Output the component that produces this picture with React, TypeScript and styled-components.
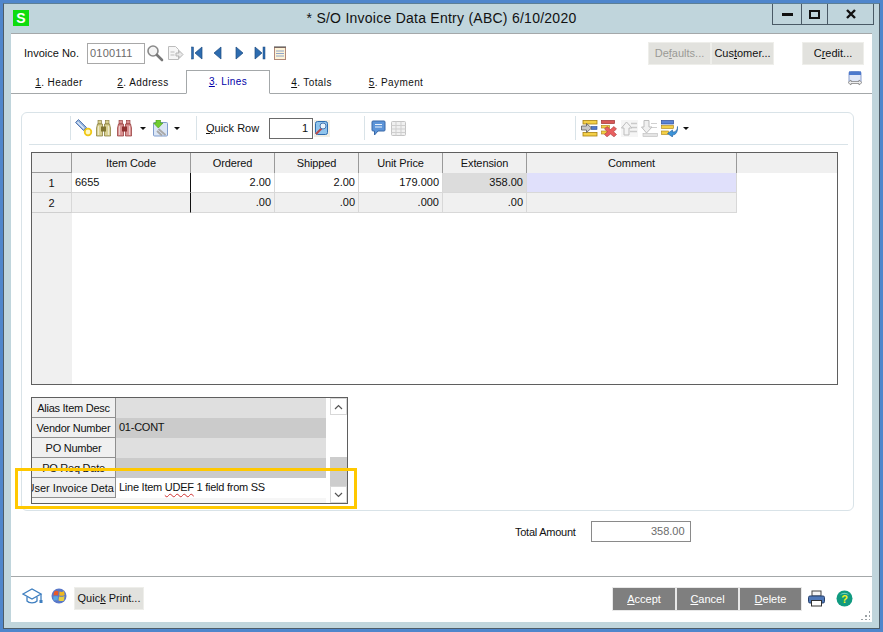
import React from "react";
import styled, { createGlobalStyle } from "styled-components";

const Global = createGlobalStyle`
  html, body { margin: 0; padding: 0; background: #4f86cc; }
  body { font-family: "Liberation Sans", Arial, sans-serif; font-size: 11px; color: #111; }
  * { box-sizing: border-box; }
  u { text-underline-offset: 1px; }
`;

const Frame = styled.div`
  width: 883px; height: 632px; background: #4f86cc; padding: 3px;
  display: flex; flex-direction: column;
`;
const Chrome = styled.div`
  flex: 1; min-height: 0; background: #c0d5dc; border: 1px solid #4d5c68; border-top-color: #5d7f96;
  display: flex; flex-direction: column; padding: 0 7px 6px 7px;
`;
const TitleBar = styled.div`
  height: 29px; display: grid; grid-template-columns: 1fr auto 1fr; align-items: start; flex: none;
`;
const AppLogo = styled.div`
  width: 16px; height: 16px; background: #0fdc0f; color: #fff; font: bold 14px/16px "Liberation Sans", sans-serif;
  text-align: center; margin: 6px 0 0 2px;
`;
const Title = styled.div`
  font-size: 14px; letter-spacing: 0.25px; line-height: 20px; padding-top: 4px; color: #111; white-space: nowrap;
`;
const WinControls = styled.div`
  justify-self: end; display: flex; height: 21px; margin-right: -2px; border: 1px solid #4a5a66; border-top: none;
`;
const WinBtn = styled.div<{ $w: number }>`
  width: ${p => p.$w}px; display: flex; align-items: center; justify-content: center;
  & + & { border-left: 1px solid #4a5a66; }
`;
const Body = styled.div`
  flex: 1; min-height: 0; background: #fff; border-top: 1px solid #a4a8aa; display: flex; flex-direction: column;
`;
const TopRow = styled.div`
  height: 36px; display: flex; align-items: center; padding: 2px 8px 0 13px; flex: none;
`;
const Label = styled.span<{ $ml?: number }>`
  font-size: 11px; white-space: nowrap; margin-left: ${p => p.$ml ?? 0}px;
`;
const InvoiceInput = styled.div`
  width: 58px; height: 21px; border: 1px solid #a8a8a8; color: #6b6b6b; margin-left: 8px;
  padding: 0 2px; line-height: 19px; font-size: 11px; letter-spacing: 0.2px;
`;
const NavIcons = styled.div`
  display: flex; align-items: center; margin-left: 1px;
`;
const IconSlot = styled.span<{ $w?: number; $m?: string }>`
  width: ${p => p.$w ?? 16}px; height: 18px; display: flex; align-items: center; justify-content: center; flex: none;
  margin: ${p => p.$m ?? "0"};
`;
const Spacer = styled.div<{ $w?: number }>`
  ${p => (p.$w ? `flex: 0 0 ${p.$w}px;` : "flex: 1;")}
`;
const GreyBtn = styled.div<{ $w: number; $off?: boolean; $ml?: number }>`
  width: ${p => p.$w}px; height: 23px; background: #e2e2de; border: 1px solid #eeeeea; text-align: center;
  line-height: 21px; font-size: 11px; color: ${p => (p.$off ? "#9a9a96" : "#111")}; flex: none; white-space: nowrap;
  margin-left: ${p => p.$ml ?? 0}px;
`;
const TabRow = styled.div`
  height: 24px; display: flex; border-bottom: 1px solid #a4a8aa; flex: none; position: relative;
`;
const Tab = styled.div<{ $w: number; $active?: boolean; $pr?: number }>`
  width: ${p => p.$w}px; height: ${p => (p.$active ? 24 : 23)}px; flex: none; text-align: center;
  font-size: 10px; letter-spacing: 0.4px; line-height: ${p => (p.$active ? 22 : 25)}px;
  padding-right: ${p => p.$pr ?? 0}px;
  color: ${p => (p.$active ? "#0000a8" : "#111")};
  ${p => p.$active && "border: 1px solid #a4a8aa; border-bottom: 1px solid #fff; background:#fff;"}
`;
const TabEnd = styled.div`
  flex: 1; display: flex; justify-content: flex-end; padding: 1px 9px 0 0;
`;
const Panel = styled.div`
  flex: none; margin: 18px 18px 0 10px; height: 399px; border: 1px solid #d9e3e8; border-radius: 6px;
  padding: 0 5px 0 9px; position: relative;
`;
const Toolbar = styled.div`
  height: 32px; margin: 0 0 7px -2px; padding-bottom: 1px; border-bottom: 1px solid #d9e3e8; display: flex; align-items: center;
`;
const ToolGroup = styled.div<{ $left: number }>`
  margin-left: ${p => p.$left}px; height: 24px; border-left: 1px solid #d9e3e8; padding-left: 4px;
  display: flex; align-items: center; flex: none;
`;
const Caret = styled.span`
  width: 0; height: 0; border: 3px solid transparent; border-top: 3px solid #111; border-bottom: none; margin: 0 5px 0 5px;
`;
const QuickInput = styled.div`
  width: 44px; height: 21px; border: 1px solid #6a6a6a; text-align: right; padding-right: 4px; line-height: 19px; margin-left: 10px;
`;
const Grid = styled.div`
  width: 807px; height: 233px; border: 1px solid #5f5f5f; background: #fff; display: flex;
`;
const RowHeadCol = styled.div`
  width: 40px; background: #f0f0f0; flex: none; display: flex; flex-direction: column;
`;
const GridMain = styled.div`
  flex: 1; display: flex; flex-direction: column;
`;
const HeadRow = styled.div`
  display: grid; grid-template-columns: 119px 84px 84px 84px 84px 210px 1fr; height: 20px; background: #f0f0f0;
`;
const HeadCell = styled.div`
  text-align: center; font-size: 11px; letter-spacing: -0.1px; line-height: 20px; border-right: 1px solid #9a9a9a; border-bottom: 1px solid #9a9a9a;
  &:last-child { border: none; }
`;
const DataRow = styled.div`
  display: grid; grid-template-columns: 119px 84px 84px 84px 84px 210px; height: 20px;
`;
const Cell = styled.div<{ $bg?: string; $right?: boolean; $sep?: boolean }>`
  background: ${p => p.$bg ?? "#fff"}; font-size: 11px; line-height: 19px; padding: 0 3px;
  text-align: ${p => (p.$right ? "right" : "left")};
  border-right: 1px solid ${p => (p.$sep ? "#111" : "#d8d8d8")}; border-bottom: 1px solid #d8d8d8;
`;
const RowNum = styled.div`
  height: 20px; text-align: center; font-size: 11px; line-height: 20px; border-bottom: 1px solid #cfcfcf; border-right: 1px solid #d8d8d8;
`;
const CornerCell = styled(RowNum)`
  border-bottom: 1px solid #9a9a9a; border-right: 1px solid #9a9a9a;
`;
const LowerGrid = styled.div`
  width: 317px; height: 107px; border: 1px solid #5f5f5f; margin-top: 12px; display: flex; background: #fff;
`;
const LowerTable = styled.div`
  width: 294px; flex: none; display: grid; grid-template-columns: 84px 1fr; grid-auto-rows: 20px; align-content: start; background: #f6f6f6;
`;
const LowerLabel = styled.div<{ $clip?: boolean }>`
  background: #f0f0f0; line-height: 20px; border-right: 1px solid #8f8f8f; border-bottom: 1px solid #8f8f8f;
  font-size: 11px; white-space: nowrap; overflow: hidden; display: flex;
  justify-content: ${p => (p.$clip ? "flex-end" : "center")};
  letter-spacing: ${p => (p.$clip ? "0" : "-0.25px")};
  padding-right: ${p => (p.$clip ? 1 : 0)}px;
`;
const LowerValue = styled.div<{ $bg: string }>`
  background: ${p => p.$bg}; line-height: 19px; padding: 0 3px; font-size: 11px; letter-spacing: -0.25px; white-space: nowrap;
`;
const Wavy = styled.span`
  text-decoration: underline wavy #d03030 1px; text-underline-offset: 2px;
`;
const ScrollBar = styled.div`
  width: 17px; margin-left: 4px; flex: none; display: flex; flex-direction: column;
`;
const ScrollBtn = styled.div`
  height: 17px; background: #fff; border: 1px solid #d8d8d8; display: flex; align-items: center; justify-content: center; flex: none;
`;
const ScrollTrack = styled.div`
  flex: 1; background: #fff; display: flex; flex-direction: column; justify-content: flex-end;
`;
const ScrollThumb = styled.div`
  height: 29px; background: #cdcdcd;
`;
const Highlight = styled.div`
  position: absolute; left: -7px; top: 355px; width: 342px; height: 41px; border: 3px solid #ffc800; pointer-events: none;
`;
const TotalRow = styled.div`
  flex: none; display: flex; align-items: center; height: 21px; margin: 10px 0 0 504px;
`;
const TotalLabel = styled(Label)`
  letter-spacing: -0.25px;
`;
const TotalInput = styled.div`
  width: 100px; height: 21px; margin-left: 15px; border: 1px solid #8a8a8a; color: #6b6b6b; text-align: right;
  padding-right: 5px; line-height: 19px;
`;
const Footer = styled.div`
  margin-top: 34px; flex: 1; border-top: 1px solid #a4a8aa; display: flex; align-items: flex-start; padding: 10px 0 0 10px; position: relative;
`;
const FootBtn = styled.div<{ $w: number }>`
  width: ${p => p.$w}px; height: 22px; margin: 1px 2px 0 0; background: #7f7f7f; color: #fff; text-align: center; line-height: 22px; font-size: 11px; flex: none;
  outline: 1px solid #e8e8e8;
`;
const Grip = styled.div`
  position: absolute; right: 2px; bottom: 2px; width: 10px; height: 10px;
  background-image: radial-gradient(#9aa0a4 1px, transparent 1.2px); background-size: 4px 4px;
  clip-path: polygon(100% 0, 100% 100%, 0 100%);
`;

const Mag = () => (
  <svg width="18" height="18" viewBox="0 0 18 18"><circle cx="7" cy="7" r="5" fill="#f4f4f4" stroke="#8a8a8a" strokeWidth="1.6"/><path d="M11 11l5 5" stroke="#777" strokeWidth="2.6" strokeLinecap="round"/></svg>
);
const DocArrow = () => (
  <svg width="17" height="17" viewBox="0 0 17 17"><path d="M1.500 1.500h7l3 3v10h-10z" fill="#f6f6f6" stroke="#bcbcbc"/><path d="M9 8h3V5.500l4 4-4 4V11H9z" fill="#e8e8e8" stroke="#b4b4b4"/><path d="M3.500 7h4M3.500 10h4" stroke="#bbb"/></svg>
);
const Nav = ({ d, bar }: { d: "l" | "r"; bar?: boolean }) => (
  <svg width="14" height="14" viewBox="0 0 14 14">
    {d === "l" ? <path d={bar ? "M12 1v12L5 7z" : "M10 1v12L3 7z"} fill="#2d6cb0" stroke="#1c4a80" strokeWidth=".7"/> : <path d={bar ? "M2 1v12l7-6z" : "M4 1v12l7-6z"} fill="#2d6cb0" stroke="#1c4a80" strokeWidth=".7"/>}
    {bar && <rect x={d === "l" ? 1.500 : 10} width="2" y="1" height="12" fill="#2d6cb0" stroke="#1c4a80" strokeWidth=".5"/>}
  </svg>
);
const Memo = () => (
  <svg width="14" height="16" viewBox="0 0 14 16"><rect x="1.500" y="2.500" width="11" height="12" fill="#fdf3d8" stroke="#b08878"/><path d="M3 6h8M3 8.500h8M3 11h8" stroke="#8ea4c8"/><path d="M2 1v2M4 1v2M6 1v2M8 1v2M10 1v2M12 1v2" stroke="#444"/></svg>
);
const SwapIcon = () => (
  <svg width="16" height="16" viewBox="0 0 16 16"><rect x="2" y="0.500" width="12" height="11" rx="1.500" fill="#dfe6f6" stroke="#8a9ecc"/><rect x="2" y="0.500" width="12" height="3.500" fill="#4c78cc"/><path d="M1 11.500l3-2.500v1.500h8V9l3 2.500-3 2.500v-1.500H4V14z" fill="#eee" stroke="#777" strokeWidth=".7"/></svg>
);
const Wand = () => (
  <svg width="18" height="18" viewBox="0 0 18 18"><path d="M.5 3.500L3.500.5l8 8-3 3z" fill="#8fb0dc" stroke="#4f72ac" strokeWidth=".9"/><path d="M2.500 3l6.500 6.500" stroke="#e4edf8" strokeWidth="1.200"/><circle cx="13" cy="13" r="3.300" fill="#fff8c8" stroke="#f0c818" strokeWidth="1.800"/></svg>
);
const Binoc = ({ c, dark }: { c: string; dark: string }) => (
  <svg width="17" height="17" viewBox="0 0 17 17"><rect x="3" y=".5" width="3.500" height="3.500" fill={c} stroke={dark} strokeWidth=".6"/><rect x="10.500" y=".5" width="3.500" height="3.500" fill={c} stroke={dark} strokeWidth=".6"/><path d="M2.500 4h5v12h-6V8z" fill={c} stroke={dark} strokeWidth=".7"/><path d="M9.500 4h5l1 4v8h-6z" fill={c} stroke={dark} strokeWidth=".7"/><rect x="6" y="6.500" width="5" height="5" fill={dark}/><path d="M3.500 6v9M13.500 6v9" stroke="#fff" strokeOpacity=".55" strokeWidth="1.200"/></svg>
);
const Download = () => (
  <svg width="17" height="17" viewBox="0 0 17 17"><rect x="1.500" y="2.500" width="14" height="13.500" rx="1" fill="#dbe6f6" stroke="#7f9ccc"/><path d="M6.500 9l7 6M5 11l5 4.500" stroke="#a8a8a8" strokeWidth="1.800"/><path d="M4 0h4.500v3H11L6.300 8 1.500 3H4z" fill="#70cc30" stroke="#4c9c20" strokeWidth=".6"/></svg>
);
const QuickIcon = () => (
  <svg width="16" height="17" viewBox="0 0 16 17"><rect width="16" height="17" fill="#f0eee4"/><rect x="1.500" y="1.500" width="12" height="13" rx="2" fill="#8fc4ec" stroke="#2c6cb0"/><path d="M2 14L8 8" stroke="#b84848" strokeWidth="2"/><circle cx="9" cy="6" r="3" fill="#e8f4fc" stroke="#4878b0"/></svg>
);
const Bubble = () => (
  <svg width="15" height="16" viewBox="0 0 15 16"><path d="M2 1h11a1 1 0 011 1v8a1 1 0 01-1 1H7l-3.500 4v-4H2a1 1 0 01-1-1V2a1 1 0 011-1z" fill="#5c94d8" stroke="#3868a8"/><path d="M4 4.500h7M4 7h7" stroke="#e8f2fc"/></svg>
);
const GridIcon = () => (
  <svg width="15" height="15" viewBox="0 0 15 15"><rect x=".5" y=".5" width="14" height="14" rx="1" fill="#f0f0f0" stroke="#c4c4c4"/><path d="M.5 4.500h14M.5 8h14M.5 11.500h14M5 .5v14M10 .5v14" stroke="#cfcfcf"/></svg>
);
const RowInsert = () => (
  <svg width="17" height="17" viewBox="0 0 17 17"><rect x="2" y=".5" width="14" height="3.500" fill="#f4d048" stroke="#a88010" strokeWidth=".8"/><rect x="2" y="12.500" width="14" height="3.500" fill="#f4d048" stroke="#a88010" strokeWidth=".8"/><rect x="10" y="6.500" width="6" height="3" fill="#5078c8" stroke="#2c4c98" strokeWidth=".6"/><path d="M.5 6h5V3.500L10.500 8l-5 4.500V10h-5z" fill="#c8c8c8" stroke="#5c5c5c" strokeWidth=".8"/></svg>
);
const RowDelete = () => (
  <svg width="17" height="17" viewBox="0 0 17 17"><rect x=".5" y=".5" width="13" height="3" fill="#d85858" stroke="#a03030" strokeWidth=".7"/><rect x=".5" y="5.500" width="8" height="2.500" fill="#f4d048" stroke="#a88010" strokeWidth=".6"/><rect x=".5" y="11" width="6" height="3" fill="#f4d048" stroke="#a88010" strokeWidth=".6"/><path d="M6 6.500l3.500 3 3.500-3 2.500 2.500-3 2.700 3 2.800-2.500 2.300L9.500 14l-3.500 2.800-2.500-2.300 3-2.800-3-2.700z" fill="#e86060" stroke="#a83838" strokeWidth=".6"/></svg>
);
const RowUp = () => (
  <svg width="17" height="17" viewBox="0 0 17 17"><rect width="17" height="17" fill="#f5f5f5"/><path d="M5.500 2L11 8H8v7H3V8H0.500z" fill="#f4f4f4" stroke="#bdbdbd"/><path d="M10 3.500h6M11 7.500h5M9 11.500h7" stroke="#cacaca" strokeWidth="1.400"/></svg>
);
const RowDown = () => (
  <svg width="17" height="17" viewBox="0 0 17 17"><path d="M5.500 13L11 7H8V.5H3V7H.5z" fill="#f0f0f0" stroke="#bdbdbd"/><path d="M10 3.500h6M11 7.500h5" stroke="#d0d0d0" strokeWidth="1.200"/><rect x="2" y="13.500" width="14.500" height="3" fill="#e4e4e4" stroke="#bbb" strokeWidth=".6"/></svg>
);
const RowWrap = () => (
  <svg width="17" height="17" viewBox="0 0 17 17"><rect x=".5" y=".5" width="12" height="3.500" fill="#5c84d4" stroke="#2c4c98" strokeWidth=".7"/><rect x=".5" y="5.500" width="12" height="3" fill="#f4d048" stroke="#a88010" strokeWidth=".6"/><rect x=".5" y="11" width="7" height="3.500" fill="#f4d048" stroke="#a88010" strokeWidth=".6"/><path d="M16.500 6.500c0 3.500-1.500 5.500-5 5.500v-2l-5 3.500 5 3.500v-2c3.500 0 5.500-3.500 5-8.500z" fill="#3c94d8" stroke="#205c9c" strokeWidth=".6"/></svg>
);
const Cap = () => (
  <svg width="21" height="18" viewBox="0 0 21 18" fill="none" stroke="#3f7fc0" strokeWidth="1.300"><path d="M1 7l9-5 9 5-9 5z" fill="#fff"/><path d="M5 10v4c2 2.500 8 2.500 10 0v-4"/><path d="M19 7v6"/><rect x="17.500" y="13" width="3" height="3" fill="#3f7fc0" stroke="none"/></svg>
);
const Orb = () => (
  <svg width="16" height="16" viewBox="0 0 16 16"><circle cx="8" cy="8" r="7.500" fill="#5a78c8"/><path d="M3 4c2-2 3-1 4.500-.5L7 7.500C5.500 7 4 7 2.500 7.500z" fill="#e85a28"/><path d="M8.500 3.500c1.500.5 3 .8 4.500-.5l.7 4c-1.500 1-3.500 1-5.500.5z" fill="#f0b820"/><path d="M2.300 8.500C4 8 5.500 8 7 8.500l-.5 4c-1.500-.5-3-.5-4 .2z" fill="#5aa8e0"/><path d="M8 8.500c2 .5 3.500.5 5.500-.5l-.5 4.500c-2 1-3.500.5-5.500 0z" fill="#e8d040"/></svg>
);
const Printer = () => (
  <svg width="17" height="17" viewBox="0 0 17 17"><rect x="4" y="1" width="9" height="5" fill="#f4f4f4" stroke="#444"/><rect x=".5" y="6" width="16" height="7" rx="1.500" fill="#4f78b8" stroke="#27406c"/><rect x="3.500" y="10.500" width="10" height="5.500" fill="#fff" stroke="#333"/></svg>
);
const Help = () => (
  <svg width="17" height="17" viewBox="0 0 17 17"><circle cx="8.500" cy="8.500" r="8" fill="#109a80"/><path d="M4 5a5 4 0 019 0c-2-1.500-7-1.500-9 0z" fill="#70d0b8"/><text x="8.500" y="13" fontSize="11" fontWeight="bold" textAnchor="middle" fill="#f0f020" fontFamily="Liberation Sans">?</text></svg>
);
const Chev = ({ up }: { up?: boolean }) => (
  <svg width="9" height="6" viewBox="0 0 9 6" fill="none" stroke="#555" strokeWidth="1.200"><path d={up ? "M1 5l3.500-3.500L8 5" : "M1 1l3.500 3.500L8 1"}/></svg>
);

const rows = [
  ["Alias Item Desc", "", "#dfdfdf"],
  ["Vendor Number", "01-CONT", "#cbcbcb"],
  ["PO Number", "", "#dfdfdf"],
  ["PO Req Date", "", "#cbcbcb"],
];

export default function App() {
  return (
    <>
      <Global />
      <Frame>
        <Chrome>
          <TitleBar>
            <AppLogo>S</AppLogo>
            <Title>* S/O Invoice Data Entry (ABC) 6/10/2020</Title>
            <WinControls>
              <WinBtn $w={28}><svg width="11" height="4"><rect width="11" height="3" y="1" fill="#111"/></svg></WinBtn>
              <WinBtn $w={26}><svg width="11" height="9"><rect x="1" y="1" width="9" height="7" fill="none" stroke="#111" strokeWidth="2"/></svg></WinBtn>
              <WinBtn $w={46}><svg width="10" height="10" stroke="#111" strokeWidth="2.400"><path d="M1 1l8 8M9 1l-8 8"/></svg></WinBtn>
            </WinControls>
          </TitleBar>
          <Body>
            <TopRow>
              <Label>Invoice No.</Label>
              <InvoiceInput>0100111</InvoiceInput>
              <NavIcons>
                <IconSlot $w={18}><Mag /></IconSlot>
                <IconSlot $w={22}><DocArrow /></IconSlot>
                <IconSlot $w={21}><Nav d="l" bar /></IconSlot>
                <IconSlot $w={21}><Nav d="l" /></IconSlot>
                <IconSlot $w={21}><Nav d="r" /></IconSlot>
                <IconSlot $w={22}><Nav d="r" bar /></IconSlot>
                <IconSlot $w={17}><Memo /></IconSlot>
              </NavIcons>
              <Spacer />
              <GreyBtn $w={63} $off>De<u>f</u>aults...</GreyBtn>
              <GreyBtn $w={63}>Cus<u>t</u>omer...</GreyBtn>
              <Spacer $w={28} />
              <GreyBtn $w={62}>C<u>r</u>edit...</GreyBtn>
            </TopRow>
            <TabRow>
              <Tab $w={96}><u>1</u>. Header</Tab>
              <Tab $w={79} $pr={7}><u>2</u>. Address</Tab>
              <Tab $w={84} $active><u>3</u>. Lines</Tab>
              <Tab $w={83}><u>4</u>. Totals</Tab>
              <Tab $w={86}><u>5</u>. Payment</Tab>
              <TabEnd><SwapIcon /></TabEnd>
            </TabRow>
            <Panel>
              <Toolbar>
                <ToolGroup $left={41}>
                  <IconSlot $w={18}><Wand /></IconSlot>
                  <IconSlot $w={21}><Binoc c="#d8d090" dark="#7f7430" /></IconSlot>
                  <IconSlot $w={21}><Binoc c="#d89090" dark="#8f3030" /></IconSlot>
                  <Caret />
                  <IconSlot $w={18}><Download /></IconSlot>
                  <Caret />
                </ToolGroup>
                <ToolGroup $left={11}>
                  <Label $ml={5}><u>Q</u>uick Row</Label>
                  <QuickInput>1</QuickInput>
                  <IconSlot $w={17}><QuickIcon /></IconSlot>
                </ToolGroup>
                <ToolGroup $left={34}>
                  <IconSlot $w={19}><Bubble /></IconSlot>
                  <IconSlot $w={21}><GridIcon /></IconSlot>
                </ToolGroup>
                <ToolGroup $left={166}>
                  <IconSlot $w={19}><RowInsert /></IconSlot>
                  <IconSlot $w={20}><RowDelete /></IconSlot>
                  <IconSlot $w={20}><RowUp /></IconSlot>
                  <IconSlot $w={21}><RowDown /></IconSlot>
                  <IconSlot $w={18}><RowWrap /></IconSlot>
                  <Caret />
                </ToolGroup>
              </Toolbar>
              <Grid>
                <RowHeadCol>
                  <CornerCell />
                  <RowNum>1</RowNum>
                  <RowNum>2</RowNum>
                </RowHeadCol>
                <GridMain>
                  <HeadRow>
                    <HeadCell>Item Code</HeadCell>
                    <HeadCell>Ordered</HeadCell>
                    <HeadCell>Shipped</HeadCell>
                    <HeadCell>Unit Price</HeadCell>
                    <HeadCell>Extension</HeadCell>
                    <HeadCell>Comment</HeadCell>
                    <HeadCell />
                  </HeadRow>
                  <DataRow>
                    <Cell $sep>6655</Cell>
                    <Cell $right>2.00</Cell>
                    <Cell $right>2.00</Cell>
                    <Cell $right>179.000</Cell>
                    <Cell $right $bg="#dcdcdc">358.00</Cell>
                    <Cell $bg="#e0e0fb" />
                  </DataRow>
                  <DataRow>
                    <Cell $sep $bg="#f0f0f0" />
                    <Cell $right $bg="#f0f0f0">.00</Cell>
                    <Cell $right $bg="#f0f0f0">.00</Cell>
                    <Cell $right $bg="#f0f0f0">.000</Cell>
                    <Cell $right $bg="#f0f0f0">.00</Cell>
                    <Cell $bg="#f0f0f0" />
                  </DataRow>
                </GridMain>
              </Grid>
              <LowerGrid>
                <LowerTable>
                  {rows.map(([l, v, bg]) => (
                    <React.Fragment key={l}>
                      <LowerLabel>{l}</LowerLabel>
                      <LowerValue $bg={bg}>{v}</LowerValue>
                    </React.Fragment>
                  ))}
                  <LowerLabel $clip>User Invoice Deta</LowerLabel>
                  <LowerValue $bg="#fff">Line Item <Wavy>UDEF</Wavy> 1 field from SS</LowerValue>
                </LowerTable>
                <ScrollBar>
                  <ScrollBtn><Chev up /></ScrollBtn>
                  <ScrollTrack><ScrollThumb /></ScrollTrack>
                  <ScrollBtn><Chev /></ScrollBtn>
                </ScrollBar>
              </LowerGrid>
              <Highlight />
            </Panel>
            <TotalRow>
              <TotalLabel>Total Amount</TotalLabel>
              <TotalInput>358.00</TotalInput>
            </TotalRow>
            <Footer>
              <IconSlot $w={22}><Cap /></IconSlot>
              <IconSlot $w={20} $m="0 0 0 6px"><Orb /></IconSlot>
              <GreyBtn $w={70} $ml={5}>Quic<u>k</u> Print...</GreyBtn>
              <Spacer />
              <FootBtn $w={62}><u>A</u>ccept</FootBtn>
              <FootBtn $w={61}><u>C</u>ancel</FootBtn>
              <FootBtn $w={61}><u>D</u>elete</FootBtn>
              <IconSlot $w={17} $m="2px 11px 0 5px"><Printer /></IconSlot>
              <IconSlot $w={17} $m="2px 19px 0 0"><Help /></IconSlot>
              <Grip />
            </Footer>
          </Body>
        </Chrome>
      </Frame>
    </>
  );
}
